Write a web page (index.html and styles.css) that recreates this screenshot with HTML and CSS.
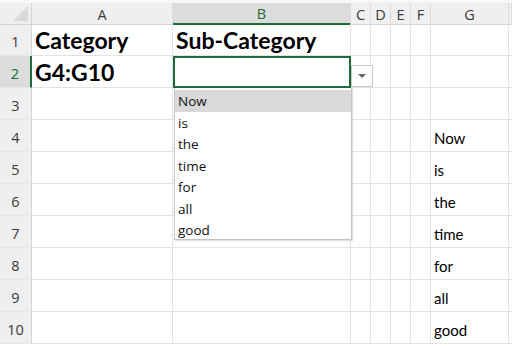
FILE: index.html
```html
<!DOCTYPE html>
<html lang="en">
<head>
  <meta charset="UTF-8">
  <title>Sheet with list validation</title>
  <link rel="stylesheet" href="styles.css">
</head>
<body>
<div class="sheet">
  <div class="topstrip"></div>

  <!-- Column headers -->
  <div class="row head">
    <div class="corner"><span class="tri"></span></div>
    <div class="colhead">A</div>
    <div class="colhead active">B</div>
    <div class="colhead">C</div>
    <div class="colhead">D</div>
    <div class="colhead">E</div>
    <div class="colhead">F</div>
    <div class="colhead">G</div>
    <div class="colhead"></div>
  </div>

  <div class="row">
    <div class="rowhead">1</div>
    <div class="cell big">Category</div>
    <div class="cell big">Sub-Category</div>
    <div class="cell"></div><div class="cell"></div><div class="cell"></div><div class="cell"></div>
    <div class="cell"></div><div class="cell"></div>
  </div>
  <div class="row">
    <div class="rowhead active">2</div>
    <div class="cell big">G4:G10</div>
    <div class="cell selected"></div>
    <div class="cell"></div><div class="cell"></div><div class="cell"></div><div class="cell"></div>
    <div class="cell"></div><div class="cell"></div>
  </div>
  <div class="row">
    <div class="rowhead">3</div>
    <div class="cell"></div><div class="cell"></div>
    <div class="cell"></div><div class="cell"></div><div class="cell"></div><div class="cell"></div>
    <div class="cell"></div><div class="cell"></div>
  </div>
  <div class="row">
    <div class="rowhead">4</div>
    <div class="cell"></div><div class="cell"></div>
    <div class="cell"></div><div class="cell"></div><div class="cell"></div><div class="cell"></div>
    <div class="cell">Now</div><div class="cell"></div>
  </div>
  <div class="row">
    <div class="rowhead">5</div>
    <div class="cell"></div><div class="cell"></div>
    <div class="cell"></div><div class="cell"></div><div class="cell"></div><div class="cell"></div>
    <div class="cell">is</div><div class="cell"></div>
  </div>
  <div class="row">
    <div class="rowhead">6</div>
    <div class="cell"></div><div class="cell"></div>
    <div class="cell"></div><div class="cell"></div><div class="cell"></div><div class="cell"></div>
    <div class="cell">the</div><div class="cell"></div>
  </div>
  <div class="row">
    <div class="rowhead">7</div>
    <div class="cell"></div><div class="cell"></div>
    <div class="cell"></div><div class="cell"></div><div class="cell"></div><div class="cell"></div>
    <div class="cell">time</div><div class="cell"></div>
  </div>
  <div class="row">
    <div class="rowhead">8</div>
    <div class="cell"></div><div class="cell"></div>
    <div class="cell"></div><div class="cell"></div><div class="cell"></div><div class="cell"></div>
    <div class="cell">for</div><div class="cell"></div>
  </div>
  <div class="row">
    <div class="rowhead">9</div>
    <div class="cell"></div><div class="cell"></div>
    <div class="cell"></div><div class="cell"></div><div class="cell"></div><div class="cell"></div>
    <div class="cell">all</div><div class="cell"></div>
  </div>
  <div class="row">
    <div class="rowhead">10</div>
    <div class="cell"></div><div class="cell"></div>
    <div class="cell"></div><div class="cell"></div><div class="cell"></div><div class="cell"></div>
    <div class="cell">good</div><div class="cell"></div>
  </div>

  <!-- Validation dropdown arrow + open list -->
  <div class="dd-btn"><span class="arrow"></span></div>
  <ul class="dd-list">
    <li class="hover">Now</li>
    <li>is</li>
    <li>the</li>
    <li>time</li>
    <li>for</li>
    <li>all</li>
    <li>good</li>
  </ul>
</div>
</body>
</html>
```

FILE: styles.css
```css
body {
  margin: 0;
  background: #ffffff;
  overflow: hidden;
}

.sheet {
  position: relative;
  width: 512px;
  height: 346px;
  font-family: "Lato", "Liberation Sans", sans-serif;
  color: #000;
}

.topstrip {
  height: 3px;
  background: #f7f7f7;
}

.row {
  display: grid;
  grid-template-columns: 32px 141px 178px 20px 20px 20px 20px 78px 1fr;
  height: 32px;
}

.row.head {
  height: 21px;
}

/* Headers */
.corner, .colhead, .rowhead {
  background: #efefef;
  color: #3a3a3a;
  font-family: "Open Sans", "Liberation Sans", sans-serif;
  font-size: 14.5px;
  box-sizing: border-box;
}

.corner {
  position: relative;
  border-right: 1px solid #d4d4d4;
  border-bottom: 1px solid #d4d4d4;
}

.corner .tri {
  position: absolute;
  right: 3px;
  bottom: 3px;
  width: 15px;
  height: 15px;
  background: #dadada;
  clip-path: polygon(100% 0, 100% 100%, 0 100%);
}

.colhead {
  display: flex;
  align-items: center;
  justify-content: center;
  padding-top: 1px;
  border-right: 1px solid #dcdcdc;
  border-bottom: 1px solid #d4d4d4;
}

.colhead.active {
  background: #dcdcdc;
  color: #1e6b3a;
  border-bottom: 2px solid #1e6b3a;
}

.rowhead {
  display: flex;
  align-items: center;
  justify-content: center;
  padding-top: 4px;
  border-right: 1px solid #d4d4d4;
  border-bottom: 1px solid #e6e6e6;
}

.rowhead.active {
  background: #dcdcdc;
  color: #1e6b3a;
  border-right: 2px solid #1e6b3a;
}

/* Cells */
.cell {
  box-sizing: border-box;
  border-right: 1px solid #e3e3e3;
  border-bottom: 1px solid #e3e3e3;
  display: flex;
  align-items: flex-end;
  padding: 0 3px 4px;
  font-size: 15px;
  white-space: nowrap;
  overflow: hidden;
}

.cell.big {
  font-size: 23px;
  font-weight: 700;
  padding-bottom: 1px;
}

.cell.selected {
  border: 1px solid #1e6b3a;
  box-shadow: inset 0 0 0 1px #1e6b3a;
}

/* Dropdown */
.dd-btn {
  position: absolute;
  left: 351px;
  top: 65px;
  width: 22px;
  height: 22px;
  box-sizing: border-box;
  background: #fff;
  border: 1px solid #c8c8c8;
  display: flex;
  align-items: center;
  justify-content: center;
}

.dd-btn .arrow {
  width: 0;
  height: 0;
  border-left: 4px solid transparent;
  border-right: 4px solid transparent;
  border-top: 4px solid #666;
}

.dd-list {
  position: absolute;
  left: 174px;
  top: 88px;
  width: 178px;
  height: 152px;
  box-sizing: border-box;
  margin: 0;
  padding: 2px 0 0;
  list-style: none;
  background: #fff;
  border: 1px solid #c4c4c4;
  border-top: none;
  box-shadow: 1px 1px 1px rgba(0, 0, 0, 0.12);
  font-family: "Open Sans", "Liberation Sans", sans-serif;
  font-size: 13.5px;
  color: #111;
}

.dd-list li {
  height: 21.5px;
  line-height: 23px;
  padding-left: 3px;
}

.dd-list li.hover {
  background: #d9d9d9;
}
```
